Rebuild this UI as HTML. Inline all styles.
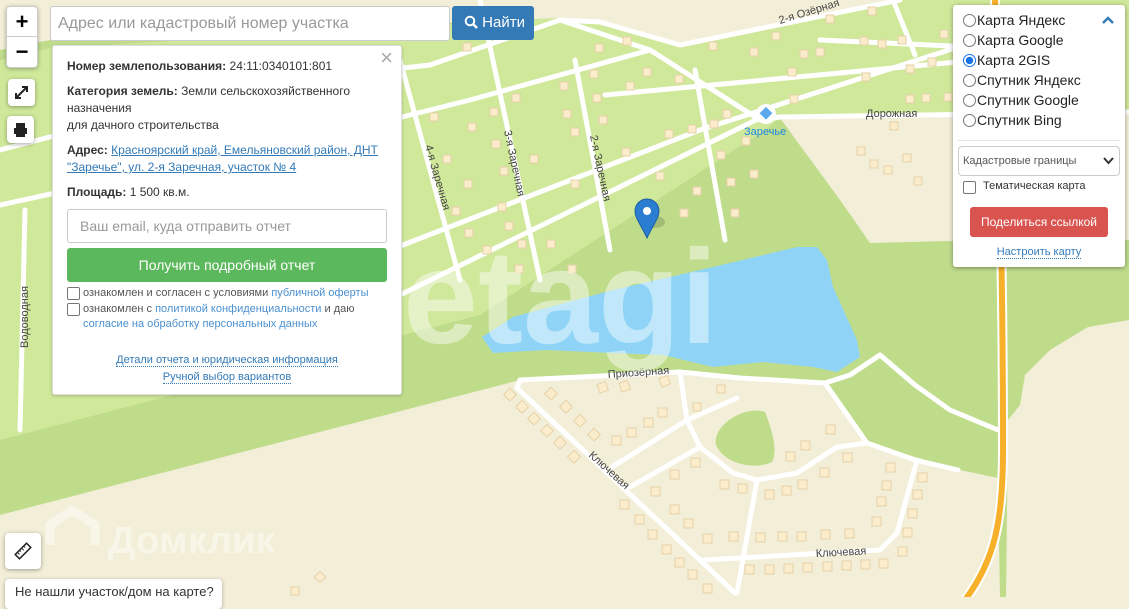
<!DOCTYPE html>
<html><head><meta charset="utf-8"><style>
*{box-sizing:border-box;margin:0;padding:0}
body{width:1129px;height:597px;overflow:hidden;position:relative;font-family:"Liberation Sans",Arial,sans-serif;background:#f2eed8}
svg.map{position:absolute;left:0;top:0}
.zoom{position:absolute;left:6px;top:6px;width:32px;height:62px;background:#fff;border:1px solid #ccc;border-radius:4px;box-shadow:0 1px 4px rgba(0,0,0,.3)}
.zoom div{height:30px;text-align:center;font:bold 22px/30px "Liberation Sans";color:#000}
.zoom div:first-child{border-bottom:1px solid #ccc}
.btnsq{position:absolute;background:#fff;border-radius:4px;box-shadow:0 1px 4px rgba(0,0,0,.35)}
.search{position:absolute;left:50px;top:6px;width:400px;height:35px;background:#fff;border:1px solid #ccc;border-radius:3px;font-size:16px;color:#999;padding:8px 7px}
.find{position:absolute;left:452px;top:6px;width:82px;height:34px;background:#337ab7;border-radius:3px;color:#fff;font-size:15px;line-height:34px;padding-left:12px}
.info{position:absolute;left:52px;top:45px;width:350px;height:350px;background:#fff;border:1px solid #ddd;border-radius:3px;box-shadow:0 1px 3px rgba(0,0,0,.2);padding:12px 14px;font-size:12px;color:#333;line-height:17px}
.info b{color:#333}
.info p{margin-bottom:8px}
.info a{color:#337ab7;text-decoration:underline}
.close{position:absolute;right:8px;top:3px;font-size:22px;color:#aaa}
.email{border:1px solid #ccc;border-radius:3px;height:34px;margin-top:0;font-size:14px;color:#999;padding:8px 12px}
.get{background:#5cb85c;border-radius:3px;height:34px;margin-top:5px;color:#fff;text-align:center;font-size:14px;line-height:34px}
.cb{font-size:11px;line-height:15px;color:#555;position:relative;padding-left:16px;margin-top:4px}
.cb i{position:absolute;left:0;top:1px;width:13px;height:13px;border:1px solid #777;border-radius:2px}
.cb span{color:#4a90d0}
.lnk{text-align:center;font-size:11px;color:#337ab7;line-height:17px}
.lnk u{text-decoration:none;border-bottom:1px dotted #337ab7}
.layers{position:absolute;left:953px;top:5px;width:172px;height:262px;background:#fff;border-radius:3px;box-shadow:0 1px 5px rgba(0,0,0,.4);font-size:14px;color:#222}
.r{position:absolute;left:10px;height:20px;line-height:20px;padding-left:14px}
.r i{position:absolute;left:0;top:4px;width:13px;height:13px;border:1px solid #777;border-radius:50%}
.r i.on{border-color:#1a73e8;background:radial-gradient(#1a73e8 45%,#fff 50%)}
.sel{position:absolute;left:5px;top:141px;width:162px;height:30px;border:1px solid #ccc;border-radius:4px;font-size:11px;color:#555;line-height:28px;padding-left:4px}
.share{position:absolute;left:17px;top:202px;width:138px;height:30px;background:#d9534f;border-radius:3px;color:#fff;font-size:12px;text-align:center;line-height:30px}
.notfound{position:absolute;left:5px;top:579px;width:217px;height:30px;background:#fff;border-radius:4px;box-shadow:0 1px 4px rgba(0,0,0,.3);font-size:13px;color:#333;padding:5px 10px;white-space:nowrap}
</style></head><body>
<svg class="map" width="1129" height="597" viewBox="0 0 1129 597">
<rect width="1129" height="597" fill="#bfdc8a"/>
<polygon points="0,60 50,48 560,18 600,20 680,45 900,0 1129,0 1129,112 780,118 765,130 480,315 0,440" fill="#cfe89a"/>
<polygon points="0,0 560,0 560,18 50,40 0,50" fill="#f2eed8"/>
<polygon points="560,0 900,0 680,45 600,20 560,18" fill="#f2eed8"/>
<polygon points="780,118 1129,112 1129,240 990,240 870,243 840,200" fill="#f2eed8"/>
<polygon points="0,515 520,380 680,372 825,383 867,443 960,470 998,478 1000,597 0,597" fill="#f2eed8"/>
<polygon points="1129,320 1088,327 1050,350 1025,375 1020,405 1008,420 1006,597 1129,597" fill="#f2eed8"/>
<path d="M716,445 C712,425 745,405 765,412 C772,430 778,450 772,462 C755,470 725,465 716,445Z" fill="#bfdc8a"/>
<path d="M482,337 L513,317 L613,290 L713,267 L797,247 L817,247 L827,260 L833,287 L857,340 L860,357 L837,372 L813,367 L763,362 L713,367 L663,355 L613,353 L547,350 L493,353 Z" fill="#8fd4f7"/>
<g stroke="#fff" stroke-width="5" fill="none" stroke-linecap="round" stroke-linejoin="round">
<path d="M0,150 L250,85 L430,65 L560,20 L600,22 L680,45 L900,0"/>
<path d="M560,20 L650,50 L760,120 L780,117 L1129,112"/>
<path d="M0,205 L390,120"/>
<path d="M390,120 L470,100 L650,50"/>
<path d="M390,250 L700,130 L980,40"/>
<path d="M400,295 L760,118"/>
<path d="M820,40 L1040,50"/>
<path d="M893,0 L915,55"/>
<path d="M605,95 L1000,58"/>
<path d="M480,0 L540,280"/><path d="M575,60 L610,250"/><path d="M400,60 L460,280"/><path d="M695,70 L725,240"/>
<path d="M25,210 L20,430"/>
<path d="M520,380 L680,372 L740,378 L825,383 L850,375 L880,355 L915,385 L950,410 L998,430"/>
<path d="M520,380 L517,388 L735,593"/>
<path d="M680,372 L687,420 L700,447 L733,473 L757,480 L797,473 L837,447 L867,443 L915,460 L958,470"/>
<path d="M825,383 L867,443"/>
<path d="M687,420 L612,467"/><path d="M687,420 L737,398"/><path d="M700,447 L630,487"/>
<path d="M757,480 L737,593"/>
<path d="M703,560 L880,550 L897,533 L917,460"/>
</g>
<path d="M995,0 C1000,150 1003,300 1003,450 C1003,520 995,560 965,600" stroke="#fff" stroke-width="10" fill="none"/>
<path d="M995,0 C1000,150 1003,300 1003,450 C1003,520 995,560 965,600" stroke="#f7b02a" stroke-width="6" fill="none"/>
<g fill="#fbeccc" stroke="#e6d2a8" stroke-width="1">
<rect x="463" y="43" width="8" height="8"/><rect x="595" y="44" width="8" height="8"/><rect x="623" y="37" width="8" height="8"/><rect x="709" y="42" width="8" height="8"/><rect x="750" y="48" width="8" height="8"/><rect x="772" y="32" width="8" height="8"/><rect x="800" y="50" width="8" height="8"/><rect x="826" y="15" width="8" height="8"/><rect x="860" y="37" width="8" height="8"/><rect x="878" y="40" width="8" height="8"/><rect x="898" y="36" width="8" height="8"/><rect x="940" y="30" width="8" height="8"/><rect x="868" y="7" width="8" height="8"/>
<rect x="590" y="70" width="8" height="8"/><rect x="643" y="68" width="8" height="8"/><rect x="675" y="75" width="8" height="8"/><rect x="788" y="68" width="8" height="8"/><rect x="816" y="48" width="8" height="8"/><rect x="862" y="73" width="8" height="8"/><rect x="906" y="65" width="8" height="8"/><rect x="928" y="58" width="8" height="8"/><rect x="790" y="95" width="8" height="8"/><rect x="906" y="95" width="8" height="8"/><rect x="922" y="94" width="8" height="8"/><rect x="944" y="93" width="8" height="8"/>
<rect x="430" y="113" width="8" height="8"/><rect x="468" y="123" width="8" height="8"/><rect x="490" y="108" width="8" height="8"/><rect x="512" y="94" width="8" height="8"/><rect x="560" y="82" width="8" height="8"/><rect x="593" y="94" width="8" height="8"/><rect x="626" y="82" width="8" height="8"/><rect x="563" y="110" width="8" height="8"/><rect x="571" y="128" width="8" height="8"/><rect x="599" y="116" width="8" height="8"/><rect x="665" y="130" width="8" height="8"/><rect x="688" y="125" width="8" height="8"/><rect x="710" y="120" width="8" height="8"/><rect x="723" y="110" width="8" height="8"/><rect x="742" y="137" width="8" height="8"/><rect x="717" y="151" width="8" height="8"/><rect x="656" y="172" width="8" height="8"/><rect x="693" y="187" width="8" height="8"/><rect x="727" y="178" width="8" height="8"/><rect x="750" y="170" width="8" height="8"/><rect x="622" y="148" width="8" height="8"/><rect x="680" y="209" width="8" height="8"/><rect x="731" y="209" width="8" height="8"/>
<rect x="443" y="155" width="8" height="8"/><rect x="464" y="180" width="8" height="8"/><rect x="492" y="140" width="8" height="8"/><rect x="500" y="167" width="8" height="8"/><rect x="530" y="155" width="8" height="8"/><rect x="571" y="180" width="8" height="8"/><rect x="452" y="207" width="8" height="8"/><rect x="498" y="203" width="8" height="8"/><rect x="465" y="229" width="8" height="8"/><rect x="505" y="222" width="8" height="8"/><rect x="518" y="240" width="8" height="8"/><rect x="547" y="240" width="8" height="8"/><rect x="483" y="246" width="8" height="8"/><rect x="515" y="265" width="8" height="8"/><rect x="568" y="265" width="8" height="8"/>
<rect x="890" y="122" width="8" height="8"/><rect x="857" y="147" width="8" height="8"/><rect x="870" y="160" width="8" height="8"/><rect x="884" y="166" width="8" height="8"/><rect x="903" y="154" width="8" height="8"/><rect x="914" y="177" width="8" height="8"/>
<rect x="717" y="385" width="8" height="8"/><rect x="693" y="403" width="8" height="8"/><rect x="598" y="383" width="9" height="9" transform="rotate(-20 602 387)"/><rect x="620" y="382" width="9" height="9" transform="rotate(-20 624 386)"/><rect x="660" y="377" width="9" height="9" transform="rotate(-20 664 381)"/>
<rect x="506" y="390" width="9" height="9" transform="rotate(45 510 394)"/><rect x="518" y="402" width="9" height="9" transform="rotate(45 522 406)"/><rect x="530" y="414" width="9" height="9" transform="rotate(45 534 418)"/><rect x="543" y="426" width="9" height="9" transform="rotate(45 547 430)"/><rect x="556" y="438" width="9" height="9" transform="rotate(45 560 442)"/><rect x="570" y="452" width="9" height="9" transform="rotate(45 574 456)"/>
<rect x="547" y="389" width="9" height="9" transform="rotate(45 551 393)"/><rect x="562" y="402" width="9" height="9" transform="rotate(45 566 406)"/><rect x="576" y="416" width="9" height="9" transform="rotate(45 580 420)"/><rect x="590" y="430" width="9" height="9" transform="rotate(45 594 434)"/>
<rect x="612" y="436" width="9" height="9"/><rect x="627" y="428" width="9" height="9"/><rect x="644" y="418" width="9" height="9"/><rect x="658" y="408" width="9" height="9"/><rect x="651" y="487" width="9" height="9"/><rect x="670" y="470" width="9" height="9"/><rect x="691" y="458" width="9" height="9"/><rect x="720" y="480" width="9" height="9"/><rect x="738" y="484" width="9" height="9"/><rect x="765" y="490" width="9" height="9"/><rect x="782" y="486" width="9" height="9"/><rect x="798" y="480" width="9" height="9"/><rect x="820" y="468" width="9" height="9"/><rect x="843" y="453" width="9" height="9"/><rect x="786" y="452" width="9" height="9"/><rect x="801" y="441" width="9" height="9"/><rect x="826" y="425" width="9" height="9"/>
<rect x="620" y="500" width="9" height="9"/><rect x="635" y="515" width="9" height="9"/><rect x="648" y="530" width="9" height="9"/><rect x="662" y="545" width="9" height="9"/><rect x="675" y="558" width="9" height="9"/><rect x="688" y="570" width="9" height="9"/><rect x="703" y="584" width="9" height="9"/><rect x="670" y="505" width="9" height="9"/><rect x="684" y="519" width="9" height="9"/>
<rect x="703" y="534" width="9" height="9"/><rect x="729" y="532" width="9" height="9"/><rect x="756" y="533" width="9" height="9"/><rect x="778" y="532" width="9" height="9"/><rect x="797" y="532" width="9" height="9"/><rect x="821" y="530" width="9" height="9"/><rect x="845" y="529" width="9" height="9"/>
<rect x="745" y="565" width="9" height="9"/><rect x="765" y="565" width="9" height="9"/><rect x="784" y="564" width="9" height="9"/><rect x="803" y="563" width="9" height="9"/><rect x="823" y="562" width="9" height="9"/><rect x="842" y="561" width="9" height="9"/><rect x="861" y="560" width="9" height="9"/><rect x="879" y="559" width="9" height="9"/><rect x="898" y="547" width="9" height="9"/><rect x="903" y="528" width="9" height="9"/><rect x="908" y="509" width="9" height="9"/><rect x="913" y="490" width="9" height="9"/><rect x="918" y="473" width="9" height="9"/><rect x="872" y="517" width="9" height="9"/><rect x="877" y="497" width="9" height="9"/><rect x="882" y="481" width="9" height="9"/><rect x="886" y="463" width="9" height="9"/>
<rect x="316" y="573" width="8" height="8" transform="rotate(45 320 577)"/><rect x="291" y="587" width="8" height="8"/>
</g>
<g font-family="Liberation Sans" font-size="11" fill="#444">
<text x="780" y="24" transform="rotate(-17 780 24)">2-я Озёрная</text>
<text x="866" y="117">Дорожная</text>
<text x="608" y="378" transform="rotate(-4 608 378)">Приозёрная</text>
<text x="816" y="557" transform="rotate(-3 816 557)">Ключевая</text>
<text x="588" y="456" transform="rotate(42 588 456)">Ключевая</text>
<text x="504" y="131" transform="rotate(78 504 131)">3-я Заречная</text>
<text x="590" y="136" transform="rotate(78 590 136)">2-я Заречная</text>
<text x="425" y="146" transform="rotate(74 425 146)">4-я Заречная</text>
<text x="28" y="348" transform="rotate(-90 28 348)">Водоводная</text>
</g>
<circle cx="766" cy="114" r="10" fill="#fff"/><rect x="761" y="109" width="9" height="9" fill="#5aa9ee" transform="rotate(45 766 114)"/>
<text x="744" y="135" font-family="Liberation Sans" font-size="11" fill="#1e88e5">Заречье</text>
<text x="403" y="343" font-family="Liberation Sans" font-weight="bold" font-size="134" fill="#fff" fill-opacity="0.45" textLength="315" lengthAdjust="spacingAndGlyphs">etagi</text>
<text x="108" y="553" font-family="Liberation Sans" font-weight="bold" font-size="38" fill="#fff" fill-opacity="0.45" textLength="167" lengthAdjust="spacingAndGlyphs">Домклик</text>
<path d="M50,545 L50,525 L72,510 L95,525 L95,545" stroke="#fff" stroke-opacity="0.45" stroke-width="9" fill="none"/>
<ellipse cx="655" cy="222" rx="10" ry="6" fill="#000" opacity="0.15"/>
<path d="M647,238 C641,225 635,218 635,211 A12,12 0 0 1 659,211 C659,218 653,225 647,238Z" fill="#2a7dd1" stroke="#1b5fa3"/>
<circle cx="647" cy="211" r="4" fill="#fff"/>
</svg>

<div class="zoom"><div>+</div><div>−</div></div>
<div class="btnsq" style="left:8px;top:79px;width:27px;height:27px"><svg width="27" height="27"><path d="M9,18 L18,9 M14,8 L19,8 L19,13 M8,14 L8,19 L13,19" stroke="#222" stroke-width="2" fill="none"/></svg></div>
<div class="btnsq" style="left:7px;top:116px;width:27px;height:27px"><svg width="27" height="27"><rect x="9" y="7" width="9" height="5" fill="#222"/><rect x="7" y="12" width="13" height="6" fill="#222"/><rect x="9" y="17" width="9" height="4" fill="#222"/></svg></div>
<div class="btnsq" style="left:5px;top:533px;width:36px;height:36px"><svg width="36" height="36"><g transform="rotate(-45 18 18)"><rect x="10" y="15" width="16" height="6" fill="none" stroke="#222" stroke-width="1.5"/><path d="M13,15v3M16,15v2M19,15v3M22,15v2" stroke="#222"/></g></svg></div>

<div class="search">Адрес или кадастровый номер участка</div>
<div class="find"><svg width="14" height="14" style="vertical-align:-2px"><circle cx="6" cy="6" r="4.3" stroke="#fff" stroke-width="2" fill="none"/><path d="M9,9 L13,13" stroke="#fff" stroke-width="2.4"/></svg> Найти</div>

<div class="info">
<div class="close">×</div>
<p><b>Номер землепользования:</b> 24:11:0340101:801</p>
<p><b>Категория земель:</b> Земли сельскохозяйственного назначения<br>для дачного строительства</p>
<p><b>Адрес:</b> <a>Красноярский край, Емельяновский район, ДНТ "Заречье", ул. 2-я Заречная, участок № 4</a></p>
<p><b>Площадь:</b> 1 500 кв.м.</p>
<div class="email">Ваш email, куда отправить отчет</div>
<div class="get">Получить подробный отчет</div>
<div class="cb"><i></i>ознакомлен и согласен с условиями <span>публичной оферты</span></div>
<div class="cb" style="margin-top:1px"><i></i>ознакомлен с <span>политикой конфиденциальности</span> и даю <span>согласие на обработку персональных данных</span></div>
<div class="lnk" style="margin-top:20px"><u>Детали отчета и юридическая информация</u></div>
<div class="lnk"><u>Ручной выбор вариантов</u></div>
</div>

<div class="layers">
<div class="r" style="top:5px"><i></i>Карта Яндекс</div>
<div class="r" style="top:25px"><i></i>Карта Google</div>
<div class="r" style="top:45px"><i class="on"></i>Карта 2GIS</div>
<div class="r" style="top:65px"><i></i>Спутник Яндекс</div>
<div class="r" style="top:85px"><i></i>Спутник Google</div>
<div class="r" style="top:105px"><i></i>Спутник Bing</div>
<svg style="position:absolute;left:148px;top:10px" width="14" height="10"><path d="M2,8 L7,3 L12,8" stroke="#337ab7" stroke-width="2.5" fill="none"/></svg>
<div style="position:absolute;left:5px;right:5px;top:135px;border-top:1px solid #e5e5e5"></div>
<div class="sel">Кадастровые границы<svg style="position:absolute;right:5px;top:10px" width="11" height="8"><path d="M1,1 L5.5,6 L10,1" stroke="#333" stroke-width="2" fill="none"/></svg></div>
<div style="position:absolute;left:10px;top:176px;width:13px;height:13px;border:1px solid #777;border-radius:2px"></div>
<div style="position:absolute;left:30px;top:175px;font-size:11px;color:#333">Тематическая карта</div>
<div class="share">Поделиться ссылкой</div>
<div style="position:absolute;left:0;right:0;top:241px;text-align:center;font-size:11px;color:#337ab7"><u style="text-decoration:none;border-bottom:1px dotted #337ab7">Настроить карту</u></div>
</div>

<div class="notfound">Не нашли участок/дом на карте?</div>
</body></html>
